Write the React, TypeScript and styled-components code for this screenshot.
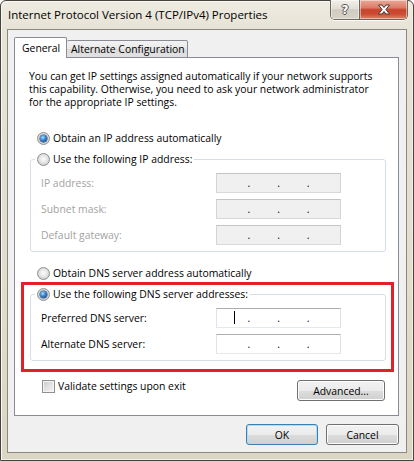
import styled, { createGlobalStyle, css } from 'styled-components';

const GlobalStyle = createGlobalStyle`
  html, body {
    margin: 0;
    padding: 0;
    background: #fff;
  }
  body {
    font-family: "Segoe UI", "Open Sans", "Noto Sans", sans-serif;
    font-size: 10.4px;
    color: #000;
  }
  *, *::before, *::after {
    box-sizing: border-box;
  }
`;

const Window = styled.div`
  display: flex;
  flex-direction: column;
  width: 414px;
  height: 461px;
  padding: 0 6px 7px;
  border: 1px solid #44433f;
  border-radius: 6px 6px 0 0;
  background: linear-gradient(to bottom, #eeebe2 0, #e7e3d6 28px, #e2ddcd 60%, #dbd5c3 100%);
  box-shadow: inset 1px 1px 0 #faf8f2, inset -1px -1px 0 #f3f0e6;
`;

const TitleBar = styled.div`
  display: flex;
  align-items: center;
  flex: none;
  height: 28px;
`;

const Title = styled.span`
  padding-left: 1px;
  font-size: 11.5px;
  line-height: 16px;
  white-space: nowrap;
`;

const CaptionButtons = styled.div`
  display: flex;
  align-self: flex-start;
  height: 20px;
  margin: -1px -1px 0 auto;
  border: 1px solid #6a675e;
  border-top: none;
  border-radius: 0 0 5px 5px;
  overflow: hidden;
  box-shadow: 0 1px 0 rgba(255, 255, 255, 0.8);
`;

const CaptionButton = styled.div<{ $close?: boolean }>`
  display: flex;
  align-items: center;
  justify-content: center;
  width: ${p => (p.$close ? 48 : 28)}px;
  box-shadow: inset 0 0 0 1px rgba(255, 255, 255, 0.45);
  background: ${p =>
    p.$close
      ? 'linear-gradient(to bottom, #eaa999 0%, #dc7c66 40%, #c8432b 52%, #cc4e33 75%, #dd846a 100%)'
      : 'linear-gradient(to bottom, #f1efe9 0%, #e1ded5 45%, #cfcbbf 52%, #d7d3c7 100%)'};

  & + & {
    border-left: 1px solid #6a675e;
  }
`;

const HelpGlyph = styled.span`
  font-family: "DejaVu Sans", sans-serif;
  font-weight: bold;
  font-size: 12px;
  line-height: 12px;
  color: #fff;
  text-shadow: 1px 0 #55534d, -1px 0 #55534d, 0 1px #55534d, 0 -1px #55534d;
`;

const Client = styled.div`
  display: flex;
  flex-direction: column;
  flex: 1;
  padding: 7px 7px 7px 6px;
  border: 1px solid #8b887f;
  background: #f0f0f0;
`;

const TabStrip = styled.div`
  position: relative;
  z-index: 1;
  display: flex;
  align-items: flex-end;
  margin-bottom: -1px;
`;

const Tab = styled.div<{ $active?: boolean }>`
  display: flex;
  align-items: center;
  border: 1px solid #898c95;
  border-radius: 2px 2px 0 0;
  white-space: nowrap;

  ${p =>
    p.$active
      ? css`
          width: 53px;
          height: 21px;
          padding: 0 0 1px 7px;
          border-bottom: none;
          background: #fff;
        `
      : css`
          width: 121px;
          height: 18px;
          padding-left: 4px;
          border-left: none;
          background: linear-gradient(to bottom, #f3f3f3 0%, #e8e8e8 50%, #dcdcdc 51%, #e1e1e1 100%);
        `}
`;

const TabPanel = styled.div`
  position: relative;
  display: flex;
  flex-direction: column;
  flex: 1;
  padding: 12px 12px 0 14px;
  border: 1px solid #898c95;
  background: #fff;
`;

const Intro = styled.p`
  margin: 0;
  line-height: 13px;
  white-space: nowrap;
`;

const OptionRow = styled.label<{ $top: number }>`
  display: flex;
  align-items: center;
  gap: 3px;
  height: 16px;
  margin: ${p => p.$top}px 0 0 8px;
  white-space: nowrap;
`;

const Radio = styled.span<{ $checked?: boolean }>`
  position: relative;
  flex: none;
  width: 13px;
  height: 13px;
  border: 1px solid #8e8f8f;
  border-radius: 50%;
  background: radial-gradient(circle at 50% 45%, #fdfdfd 0, #e6e6e6 45%, #d2d2d2 70%, #f4f4f4 100%);

  ${p =>
    p.$checked &&
    css`
      &::after {
        content: '';
        position: absolute;
        inset: 2px;
        border-radius: 50%;
        background: radial-gradient(circle at 40% 35%, #a8e4ff 0, #3d8ad6 40%, #123f80 85%);
        box-shadow: 0 0 0 0.5px #1e3c66;
      }
    `}
`;

const GroupBox = styled.div`
  margin: 13px 0 0 1px;
  padding: 0 44px 6px 10px;
  border: 1px solid #d5dfe5;
  border-radius: 3px;
`;

const GroupHeading = styled.label`
  display: flex;
  align-items: center;
  gap: 3px;
  width: fit-content;
  height: 16px;
  margin: -9px 0 0 -6px;
  padding: 0 2px;
  background: #fff;
  white-space: nowrap;
`;

const Fields = styled.div`
  display: grid;
  row-gap: 6px;
  margin-top: 6px;
`;

const FieldRow = styled.div`
  display: grid;
  grid-template-columns: 1fr 125px;
  align-items: center;
  height: 20px;
`;

const FieldLabel = styled.span<{ $disabled?: boolean }>`
  color: ${p => (p.$disabled ? '#a3a3a3' : '#000')};
  white-space: nowrap;
`;

const IpBox = styled.div<{ $disabled?: boolean }>`
  position: relative;
  display: flex;
  align-items: center;
  justify-content: center;
  gap: 27px;
  height: 20px;
  line-height: 20px;
  border: 1px solid;
  ${p =>
    p.$disabled
      ? css`
          border-color: #c4c4c4 #d4d4d4 #d9d9d9 #d4d4d4;
          background: #f0f0f0;
        `
      : css`
          border-color: #abadb3 #dbdfe6 #e3e9ef #e2e3ea;
          background: #fff;
        `}
`;

const Caret = styled.span`
  position: absolute;
  left: 17px;
  top: 2px;
  width: 1px;
  height: 13px;
  background: #000;
`;

const BottomRow = styled.div`
  display: flex;
  align-items: flex-start;
  justify-content: space-between;
  margin-top: 17px;
  padding: 0 1px 0 13px;
`;

const CheckRow = styled.label`
  display: flex;
  align-items: center;
  gap: 3px;
  height: 16px;
  white-space: nowrap;
`;

const Checkbox = styled.span`
  flex: none;
  width: 13px;
  height: 13px;
  border: 1px solid #8e8f8f;
  background: linear-gradient(135deg, #c9c9c9 0%, #e2e2e2 50%, #f7f7f7 100%);
  box-shadow: inset 0 0 0 1px #f4f4f4;
`;

const Button = styled.button<{ $width: number; $default?: boolean; $top?: number }>`
  width: ${p => p.$width}px;
  height: 21px;
  margin-top: ${p => p.$top ?? 0}px;
  padding: 0;
  font: inherit;
  color: #000;
  border: 1px solid ${p => (p.$default ? '#3c7fb1' : '#707070')};
  border-radius: 3px;
  background: linear-gradient(to bottom, #f2f2f2 0%, #ebebeb 50%, #dddddd 51%, #cfcfcf 100%);
  box-shadow: inset 0 0 0 1px ${p => (p.$default ? '#aedcf5' : '#fcfcfc')};
`;

const Footer = styled.div`
  display: flex;
  flex: none;
  justify-content: flex-end;
  gap: 8px;
  margin-top: 8px;
`;

const Highlight = styled.div`
  position: absolute;
  left: 6px;
  top: 224px;
  width: 373px;
  height: 90px;
  border: 3px solid #e2202a;
  pointer-events: none;
`;

const CloseIcon = () => (
  <svg width="14" height="11" viewBox="0 0 14 11">
    <path
      d="M1.5 1 H5 L7 3.6 L9 1 H12.5 L8.9 5.5 L12.5 10 H9 L7 7.4 L5 10 H1.5 L5.1 5.5 Z"
      fill="#fff"
      stroke="#4a3a36"
      strokeWidth="1"
      strokeLinejoin="round"
    />
  </svg>
);

type IpFieldProps = {
  label: string;
  disabled?: boolean;
  focused?: boolean;
};

const IpField = ({ label, disabled, focused }: IpFieldProps) => (
  <FieldRow>
    <FieldLabel $disabled={disabled}>{label}</FieldLabel>
    <IpBox $disabled={disabled}>
      {focused && <Caret />}
      <span>.</span>
      <span>.</span>
      <span>.</span>
    </IpBox>
  </FieldRow>
);

const ipFields = ['IP address:', 'Subnet mask:', 'Default gateway:'];
const dnsFields = ['Preferred DNS server:', 'Alternate DNS server:'];

export default function App() {
  return (
    <>
      <GlobalStyle />
      <Window>
        <TitleBar>
          <Title>Internet Protocol Version 4 (TCP/IPv4) Properties</Title>
          <CaptionButtons>
            <CaptionButton>
              <HelpGlyph>?</HelpGlyph>
            </CaptionButton>
            <CaptionButton $close>
              <CloseIcon />
            </CaptionButton>
          </CaptionButtons>
        </TitleBar>

        <Client>
          <TabStrip>
            <Tab $active>General</Tab>
            <Tab>Alternate Configuration</Tab>
          </TabStrip>

          <TabPanel>
            <Intro>
              You can get IP settings assigned automatically if your network supports
              <br />
              this capability. Otherwise, you need to ask your network administrator
              <br />
              for the appropriate IP settings.
            </Intro>

            <OptionRow $top={21}>
              <Radio $checked />
              Obtain an IP address automatically
            </OptionRow>

            <GroupBox>
              <GroupHeading>
                <Radio />
                Use the following IP address:
              </GroupHeading>
              <Fields>
                {ipFields.map(label => (
                  <IpField key={label} label={label} disabled />
                ))}
              </Fields>
            </GroupBox>

            <OptionRow $top={13}>
              <Radio />
              Obtain DNS server address automatically
            </OptionRow>

            <GroupBox>
              <GroupHeading>
                <Radio $checked />
                Use the following DNS server addresses:
              </GroupHeading>
              <Fields>
                {dnsFields.map((label, i) => (
                  <IpField key={label} label={label} focused={i === 0} />
                ))}
              </Fields>
            </GroupBox>

            <BottomRow>
              <CheckRow>
                <Checkbox />
                Validate settings upon exit
              </CheckRow>
              <Button $width={88} $top={2}>
                Advanced...
              </Button>
            </BottomRow>

            <Highlight />
          </TabPanel>

          <Footer>
            <Button $width={72} $default>
              OK
            </Button>
            <Button $width={73}>Cancel</Button>
          </Footer>
        </Client>
      </Window>
    </>
  );
}
